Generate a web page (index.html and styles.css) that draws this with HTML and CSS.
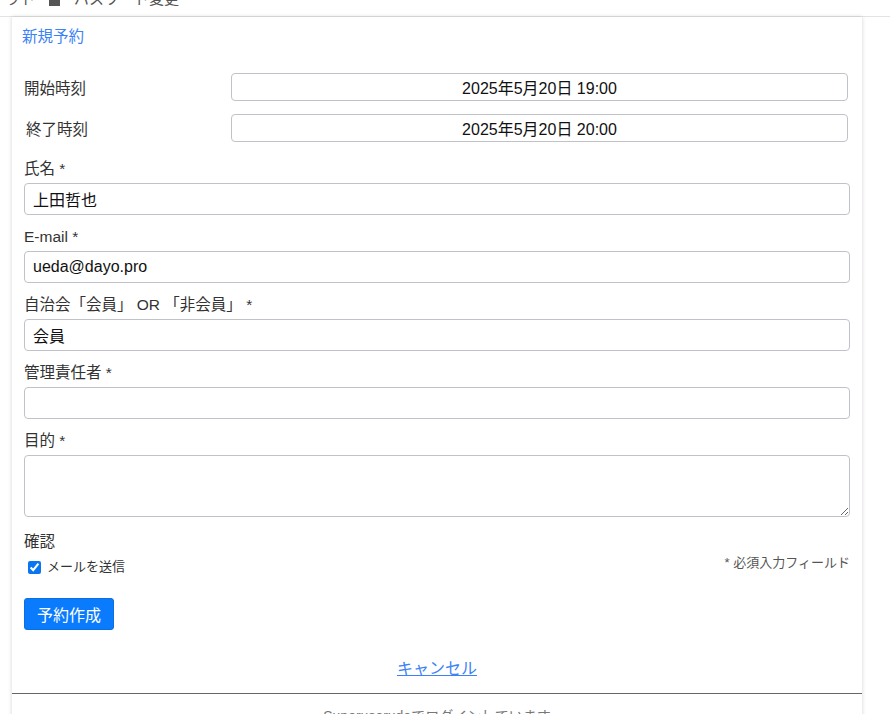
FILE: index.html
```
<!DOCTYPE html>
<html lang="ja">
<head>
    <meta charset="UTF-8">
    <meta name="viewport" content="width=device-width, initial-scale=1.0">
    <title>新規予約</title>
    <link rel="stylesheet" href="styles.css">
</head>
<body>
    <div class="topbar">
        <span class="topbar-item cut-left">ログアウト</span>
        <span class="topbar-icon"></span>
        <span class="topbar-item">パスワード変更</span>
    </div>

    <div class="panel">
        <a class="title" href="#">新規予約</a>

        <div class="time-rows">
            <label class="time-label">開始時刻</label>
            <input class="time-input" type="text" value="2025年5月20日 19:00">
            <label class="time-label shifted">終了時刻</label>
            <input class="time-input" type="text" value="2025年5月20日 20:00">
        </div>

        <div class="field">
            <label>氏名 *</label>
            <input type="text" value="上田哲也">
        </div>
        <div class="field">
            <label>E-mail *</label>
            <input type="text" value="ueda@dayo.pro">
        </div>
        <div class="field">
            <label>自治会「会員」 OR 「非会員」 *</label>
            <input type="text" value="会員">
        </div>
        <div class="field">
            <label>管理責任者 *</label>
            <input type="text" value="">
        </div>
        <div class="field">
            <label>目的 *</label>
            <textarea></textarea>
        </div>

        <div class="confirm">
            <div>
                <div class="confirm-label">確認</div>
                <label class="check"><input type="checkbox" checked> メールを送信</label>
            </div>
            <div class="required-note">* 必須入力フィールド</div>
        </div>

        <button class="submit">予約作成</button>

        <div class="cancel"><a href="#">キャンセル</a></div>

        <div class="footer">Superuserudaでログインしています</div>
    </div>
</body>
</html>
```

FILE: styles.css
```
body {
    margin: 0;
    background: #fff;
    font-family: "Liberation Sans", "Noto Sans CJK JP", sans-serif;
    color: #333;
}
.topbar {
    height: 16px;
    border-bottom: 1px solid #e3e3e3;
    overflow: hidden;
    display: flex;
    align-items: flex-start;
    gap: 14px;
    font-size: 15px;
    color: #555;
}
.topbar-item {
    line-height: 24px;
    margin-top: -13px;
}
.cut-left {
    margin-left: -40px;
}
.topbar-icon {
    width: 11px;
    height: 10px;
    background: #555;
    margin-top: -4px;
}
.panel {
    width: 826px;
    margin-left: 12px;
    padding: 8px 12px 0;
    box-shadow: 0 0 4px rgba(0, 0, 0, 0.18);
    min-height: 720px;
}
.title {
    display: block;
    color: #3b82f6;
    text-decoration: none;
    font-size: 15.5px;
    line-height: 24px;
    margin-left: -2px;
}
.time-rows {
    display: grid;
    grid-template-columns: 207px 617px;
    row-gap: 13px;
    align-items: center;
    margin-top: 24px;
    margin-bottom: 15px;
}
.time-label {
    font-size: 15.5px;
}
.time-label.shifted {
    padding-left: 2px;
}
.time-input {
    height: 28px;
    box-sizing: border-box;
    border: 1px solid #bfc3c9;
    border-radius: 4px;
    text-align: center;
    font-family: "Liberation Sans", "Noto Sans CJK JP", sans-serif;
    font-size: 16px;
    color: #111;
}
.field {
    margin-bottom: 10px;
}
.field label {
    display: block;
    font-size: 15.5px;
    line-height: 24px;
    margin-bottom: 2px;
}
.field input,
.field textarea {
    display: block;
    width: 100%;
    box-sizing: border-box;
    height: 32px;
    border: 1px solid #bfc3c9;
    border-radius: 4px;
    padding: 0 8px;
    font-family: "Liberation Sans", "Noto Sans CJK JP", sans-serif;
    font-size: 16px;
    color: #111;
}
.field textarea {
    height: 62px;
    resize: vertical;
}
.confirm {
    display: flex;
    justify-content: space-between;
    align-items: flex-start;
    margin-top: 13px;
}
.confirm-label {
    font-size: 15.5px;
    line-height: 24px;
}
.check {
    display: flex;
    align-items: center;
    gap: 6px;
    font-size: 13px;
    line-height: 20px;
    padding-left: 4px;
    margin-top: 3px;
}
.check input {
    margin: 0;
    width: 13px;
    height: 13px;
    accent-color: #0a75f0;
}
.required-note {
    font-size: 13px;
    color: #555;
    margin-top: 22px;
}
.submit {
    display: block;
    margin-top: 21px;
    height: 32px;
    width: 90px;
    border: 1px solid #0a6fe0;
    border-radius: 3px;
    background: #0a7bfd;
    color: #fff;
    font-family: "Liberation Sans", "Noto Sans CJK JP", sans-serif;
    font-size: 16px;
    padding: 0;
}
.cancel {
    text-align: center;
    margin-top: 27px;
    line-height: 24px;
    font-size: 16px;
}
.cancel a {
    color: #3b82f6;
}
.footer {
    margin: 12px -12px 0;
    border-top: 1px solid #666;
    text-align: center;
    padding-top: 11px;
    font-size: 14px;
    color: #777;
}
```
